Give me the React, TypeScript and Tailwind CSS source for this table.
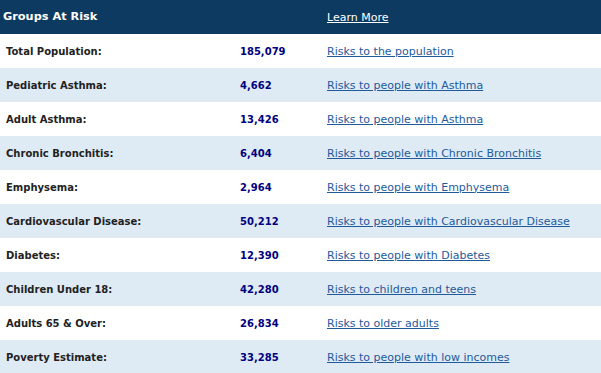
import React from "react";

const rows: [string, string, string][] = [
  ["Total Population:", "185,079", "Risks to the population"],
  ["Pediatric Asthma:", "4,662", "Risks to people with Asthma"],
  ["Adult Asthma:", "13,426", "Risks to people with Asthma"],
  ["Chronic Bronchitis:", "6,404", "Risks to people with Chronic Bronchitis"],
  ["Emphysema:", "2,964", "Risks to people with Emphysema"],
  ["Cardiovascular Disease:", "50,212", "Risks to people with Cardiovascular Disease"],
  ["Diabetes:", "12,390", "Risks to people with Diabetes"],
  ["Children Under 18:", "42,280", "Risks to children and teens"],
  ["Adults 65 & Over:", "26,834", "Risks to older adults"],
  ["Poverty Estimate:", "33,285", "Risks to people with low incomes"],
];

export default function App() {
  return (
    <div className="w-[601px] bg-white" style={{ fontFamily: '"DejaVu Sans", Verdana, sans-serif' }}>
      <div className="flex h-[34px] items-center bg-[#0c3a60] text-white">
        <div className="w-[327px] pl-[3px] text-[11.3px] font-bold">Groups At Risk</div>
        <a className="pt-[2px] text-[11px] underline">Learn More</a>
      </div>
      {rows.map((r, i) => (
        <div
          key={i}
          className={`flex h-[34px] items-center ${i % 2 === 1 ? "bg-[#deebf5]" : "bg-white"}`}
        >
          <div className="w-[240px] pl-[6px] text-[10px] font-bold text-[#222222]">{r[0]}</div>
          <div className="w-[87px] text-[10px] font-bold text-[#000080]">{r[1]}</div>
          <a className="pt-[2px] text-[11px] text-[#1f5a9a] underline">{r[2]}</a>
        </div>
      ))}
    </div>
  );
}
